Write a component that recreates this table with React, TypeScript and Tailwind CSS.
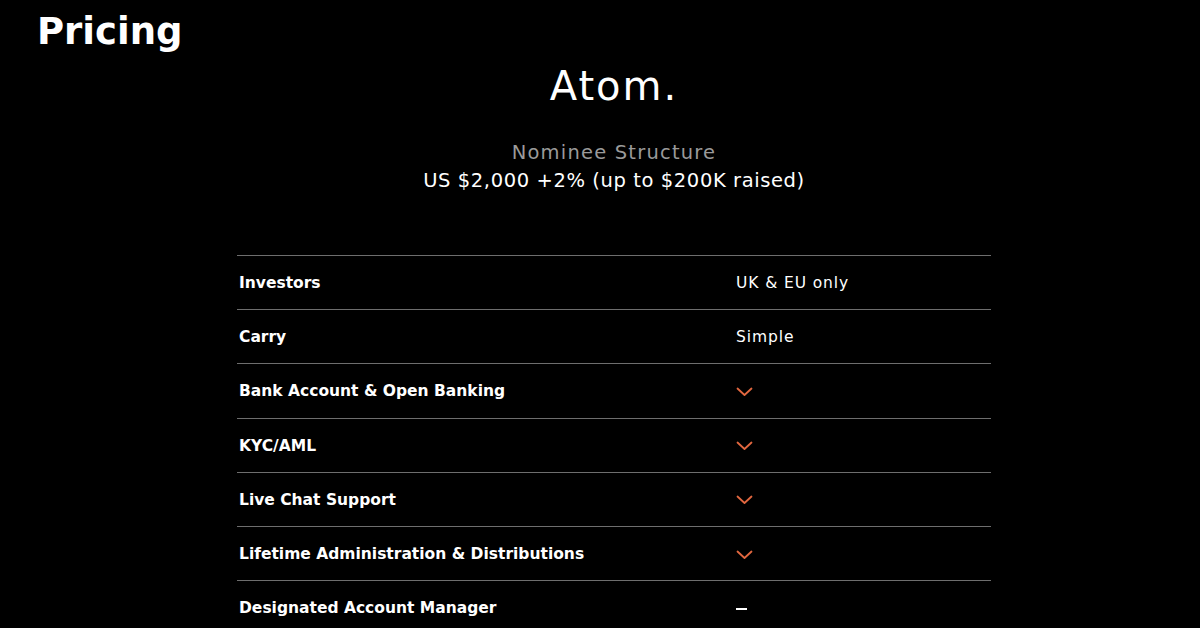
const rows: { label: string; value: "check" | "dash" | string }[] = [
  { label: "Investors", value: "UK & EU only" },
  { label: "Carry", value: "Simple" },
  { label: "Bank Account & Open Banking", value: "check" },
  { label: "KYC/AML", value: "check" },
  { label: "Live Chat Support", value: "check" },
  { label: "Lifetime Administration & Distributions", value: "check" },
  { label: "Designated Account Manager", value: "dash" },
];

function Check() {
  return (
    <svg width="17" height="10" viewBox="0 0 17 10" fill="none">
      <path
        d="M1.5 1.5L8.5 8L15.5 1.5"
        stroke="#e2673f"
        strokeWidth="1.8"
        strokeLinecap="round"
        strokeLinejoin="round"
      />
    </svg>
  );
}

export default function App() {
  return (
    <div
      className="w-[1200px] h-[628px] overflow-hidden bg-black text-white"
      style={{ fontFamily: "'DejaVu Sans', Inter, sans-serif" }}
    >
      <h1 className="pl-[37px] pt-[7px] text-[37px] leading-[50px] font-bold">
        Pricing
      </h1>
      <div className="ml-[237px] w-[754px]">
        <div className="flex flex-col items-center">
          <div className="mt-[4px] text-[40px] leading-[50px] font-normal tracking-[2px]">
            Atom.
          </div>
          <div className="mt-[29px] text-[19.5px] leading-[26px] tracking-[1.2px] text-[#9a9a9a]">
            Nominee Structure
          </div>
          <div className="mt-[1px] text-[19.5px] leading-[28px] tracking-[0.6px] text-white">
            US $2,000 +2% (up to $200K raised)
          </div>
        </div>
        <div className="mt-[60px]">
          {rows.map((r) => (
            <div
              key={r.label}
              className="flex items-center h-[54.2px] pt-[2px] border-t-[1.5px] border-[#6e6e6e] text-[15.5px]"
            >
              <div className="w-[499px] pl-[2px] font-bold">{r.label}</div>
              <div className="flex-1">
                {r.value === "check" ? (
                  <Check />
                ) : r.value === "dash" ? (
                  <div className="w-[11px] h-[2px] bg-white" />
                ) : (
                  <span className="font-normal tracking-[0.9px]">{r.value}</span>
                )}
              </div>
            </div>
          ))}
        </div>
      </div>
    </div>
  );
}
